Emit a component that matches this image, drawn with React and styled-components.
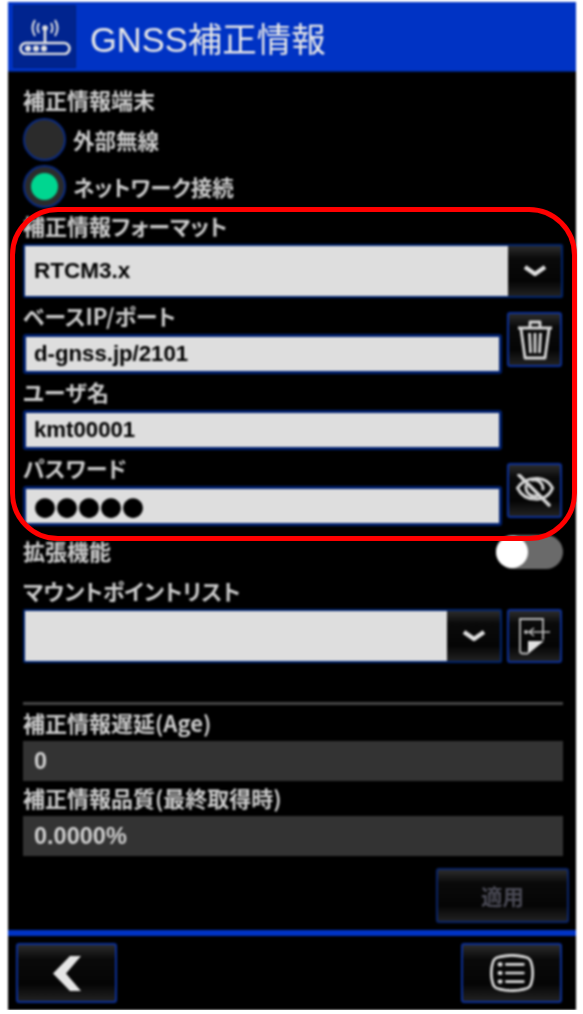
import React from 'react';
import styled, { createGlobalStyle } from 'styled-components';

const Global = createGlobalStyle`
    html, body { margin: 0; padding: 0; background: #fff; }
    body { font-family: "Noto Sans CJK JP", "Liberation Sans", sans-serif; font-feature-settings: "palt"; }
`;

const Screen = styled.div`
    position: relative;
    width: 568px;
    height: 1008px;
    margin: 2px 0 0 8px;
`;
const Panel = styled.div`
    height: 100%;
    background: #000;
    display: flex;
    flex-direction: column;
    filter: blur(.8px);
`;
const Header = styled.header`
    display: flex;
    align-items: center;
    gap: 14px;
    height: 70px;
    padding-left: 5px;
    background: #0033c4;
    border-bottom: 1px solid #00206e;
    box-sizing: border-box;
`;
const HeaderIcon = styled.div`
    width: 63px;
    height: 63px;
    display: flex;
    align-items: center;
    justify-content: center;
    background: #00248f;
    border: 1px solid #001f78;
    box-sizing: border-box;
`;
const Title = styled.h1`
    margin: 0;
    font-family: "Liberation Sans", "Noto Sans CJK JP", sans-serif;
    font-size: 34.5px;
    font-weight: 400;
    color: #e8e8e8;
    font-feature-settings: normal;
`;
const Body = styled.main`
    flex: 1;
    display: flex;
    flex-direction: column;
    padding: 17px 13px 0 15px;
    box-sizing: border-box;
`;
const Label = styled.div`
    height: 24px;
    line-height: 20px;
    margin-bottom: ${p => (p.$flush ? 0 : 5)}px;
    font-size: 22px;
    font-weight: 700;
    color: #cccccc;
    white-space: nowrap;
`;
const RadioGroup = styled.div`
    display: flex;
    flex-direction: column;
    gap: 4px;
    margin-bottom: 7px;
`;
const RadioRow = styled.div`
    display: flex;
    align-items: center;
    gap: 7px;
    height: 43px;
    font-size: 21.5px;
    font-weight: 700;
    color: #cccccc;
`;
const Radio = styled.span`
    width: 43px;
    height: 43px;
    border-radius: 50%;
    border: 2px solid #0a2a80;
    background: #2b2b2b;
    box-sizing: border-box;
    display: flex;
    align-items: center;
    justify-content: center;
    &::after {
        content: '';
        display: ${p => (p.$on ? 'block' : 'none')};
        width: 27px;
        height: 27px;
        border-radius: 50%;
        background: #00d690;
    }
`;
const Rows = styled.div`
    display: flex;
    gap: 5px;
    align-items: flex-start;
`;
const Fields = styled.div`
    flex: none;
    width: 479px;
    display: flex;
    flex-direction: column;
`;
const Input = styled.div`
    height: 40px;
    padding-left: 8px;
    box-sizing: border-box;
    display: flex;
    align-items: center;
    background: #dedede;
    border: 3px solid #00206e;
    border-radius: 3px;
    color: #000;
    font-family: "Liberation Sans", sans-serif;
    font-size: 22.2px;
    font-weight: 700;
    margin-bottom: ${p => (p.$last ? 0 : 7)}px;
`;
const Dots = styled.span`
    font-family: "Noto Sans CJK JP", sans-serif;
    font-feature-settings: normal;
    font-size: 22px;
    color: #000;
`;
const Select = styled.div`
    height: 54px;
    display: flex;
    margin-bottom: ${p => (p.$last ? 0 : 7)}px;
    border: 2px solid #00246f;
    border-radius: 2px;
    box-sizing: border-box;
`;
const SelectValue = styled.div`
    flex: 1;
    display: flex;
    align-items: center;
    padding-left: 9px;
    background: #dedede;
    color: #000;
    font-family: "Liberation Sans", sans-serif;
    font-size: 22.5px;
    font-weight: 700;
`;
const SelectArrow = styled.div`
    width: 53px;
    display: flex;
    align-items: center;
    justify-content: center;
    background: linear-gradient(#2c2c2c, #0a0a0a 25%, #050505 70%, #222);
`;
const IconButton = styled.button`
    flex: none;
    display: flex;
    align-items: center;
    justify-content: center;
    width: ${p => p.$w || 55}px;
    height: ${p => p.$h || 55}px;
    margin-top: ${p => p.$top || 0}px;
    padding: 0;
    background: linear-gradient(#2c2c2c, #0a0a0a 25%, #050505 70%, #222);
    border: 2px solid ${p => (p.$dim ? '#0a2468' : '#0b2f96')};
    border-radius: 3px;
    box-sizing: border-box;
    color: ${p => (p.$dim ? '#4a4a55' : '#d8d8d8')};
    font-family: inherit;
    font-size: 21.5px;
    font-weight: 700;
`;
const SwitchRow = styled.div`
    display: flex;
    justify-content: space-between;
    align-items: center;
    height: 34px;
    margin: 9px 0 11px;
`;
const Switch = styled.span`
    position: relative;
    width: 67px;
    height: 34px;
    border-radius: 17px;
    background: #6a6a6a;
    &::after {
        content: '';
        position: absolute;
        left: 0;
        top: 1px;
        width: 32px;
        height: 32px;
        border-radius: 50%;
        background: #fff;
    }
`;
const Divider = styled.hr`
    width: 100%;
    height: 3px;
    margin: 39px 0 7px;
    border: 0;
    background: #444;
`;
const ReadOnly = styled.div`
    height: 40px;
    margin-bottom: 6px;
    padding-left: 11px;
    display: flex;
    align-items: center;
    background: #333;
    color: #d0d0d0;
    font-family: "Liberation Sans", sans-serif;
    font-size: 23.5px;
    font-weight: 700;
`;
const Apply = styled.div`
    display: flex;
    justify-content: flex-end;
    margin: 6px -6px 0 0;
`;
const Footer = styled.footer`
    height: 80px;
    margin-top: 7px;
    padding: 7px 14px 0 8px;
    box-sizing: border-box;
    display: flex;
    justify-content: space-between;
    align-items: flex-start;
    border-top: 6px solid #0033c4;
`;
const Highlight = styled.div`
    position: absolute;
    left: 2px;
    top: 205px;
    width: 567px;
    height: 334px;
    box-sizing: border-box;
    border: 5px solid #f00;
    border-radius: 48px;
    pointer-events: none;
`;

const Chevron = () => (
    <svg width="24" height="14" viewBox="0 0 24 14" fill="none" stroke="#e0e0e0" strokeWidth="4.4" strokeLinejoin="round">
        <path d="M2 3 L12 10 L22 3" />
    </svg>
);
const Trash = () => (
    <svg width="36" height="40" viewBox="0 0 36 40" fill="none" stroke="#d8d8d8" strokeWidth="2.8" strokeLinejoin="round">
        <path d="M1 8 H35" strokeWidth="3.2" />
        <path d="M13 7 V2 H23 V7" />
        <path d="M4 9 L8 38 H28 L32 9" />
        <path d="M12.5 13 L13.5 33 M18 13 V33 M23.5 13 L22.5 33" />
    </svg>
);
const EyeOff = () => (
    <svg width="38" height="33" viewBox="0 0 38 33" fill="none" stroke="#d4d4d4" strokeWidth="3" strokeLinecap="round">
        <path d="M1.5 14 C6 7 14 4 22 4.5 C29 5 34 9 36.5 14 C34 21 27 26 19 25 C11 25 5 21 1.5 14 Z" />
        <path d="M10 12 A9 9 0 0 0 21 22 M27 15 A9 9 0 0 0 16 6" />
        <path d="M3 1 L33 31" strokeWidth="3.6" />
    </svg>
);
const DocImport = () => (
    <svg width="32" height="37" viewBox="0 0 32 37" fill="none" stroke="#bdbdbd" strokeWidth="1.8">
        <path d="M24 22 V1 H1 V33 Q1 35.5 4 35.5 H9" />
        <path d="M31 14 H10 M15 10 L10 14 L15 18" strokeWidth="1.6" />
        <circle cx="7" cy="14" r="2" fill="#bdbdbd" stroke="none" />
        <path d="M9 23 H25 L9 36 Z" fill="#e2e2e2" stroke="none" />
    </svg>
);
const Router = () => (
    <svg width="52" height="36" viewBox="0 0 52 36" fill="none" stroke="#e4e4e4" strokeWidth="2">
        <circle cx="26" cy="9" r="2.8" fill="#e4e4e4" stroke="none" />
        <path d="M26 10 V24" strokeWidth="2.6" />
        <path d="M20 4 Q17 9 20 14 M32 4 Q35 9 32 14" />
        <path d="M16 1 Q11 9 16 17 M36 1 Q41 9 36 17" />
        <rect x="1.5" y="24" width="49" height="11" rx="5.5" strokeWidth="2.6" />
        <circle cx="9" cy="29.5" r="3" fill="#e4e4e4" stroke="none" />
        <circle cx="17" cy="29.5" r="3" fill="#e4e4e4" stroke="none" />
        <circle cx="25" cy="29.5" r="3" fill="#e4e4e4" stroke="none" />
    </svg>
);
const Back = () => (
    <svg width="28" height="35" viewBox="0 0 28 35"><path d="M17 0 H28 L13 17.5 L28 35 H17 L0 17.5 Z" fill="#e6e6e6" /></svg>
);
const ListIcon = () => (
    <svg width="46" height="38" viewBox="0 0 46 40" fill="none" stroke="#dcdcdc" strokeWidth="2.8" strokeLinecap="round">
        <path d="M10 3 C18 1 28 1 36 3 C42 4 43 7 44 12 C45 17 45 23 44 28 C43 33 42 36 36 37 C28 39 18 39 10 37 C4 36 3 33 2 28 C1 23 1 17 2 12 C3 7 4 4 10 3 Z" />
        <path d="M17 11 H35 M17 20 H35 M17 29 H35" />
        <path d="M10 11 H11 M10 20 H11 M10 29 H11" strokeWidth="4.4" />
    </svg>
);

const App = () => (
    <Screen>
        <Global />
        <Panel>
            <Header>
                <HeaderIcon><Router /></HeaderIcon>
                <Title>GNSS補正情報</Title>
            </Header>
            <Body>
                <Label>補正情報端末</Label>
                <RadioGroup>
                    <RadioRow><Radio />外部無線</RadioRow>
                    <RadioRow><Radio $on />ネットワーク接続</RadioRow>
                </RadioGroup>
                <Label>補正情報フォーマット</Label>
                <Select>
                    <SelectValue>RTCM3.x</SelectValue>
                    <SelectArrow><Chevron /></SelectArrow>
                </Select>
                <Rows>
                    <Fields>
                        <Label>ベースIP/ポート</Label>
                        <Input>d-gnss.jp/2101</Input>
                        <Label>ユーザ名</Label>
                        <Input>kmt00001</Input>
                        <Label>パスワード</Label>
                        <Input $last><Dots>●●●●●</Dots></Input>
                    </Fields>
                    <div>
                        <IconButton $top={7}><Trash /></IconButton>
                        <IconButton $top={96}><EyeOff /></IconButton>
                    </div>
                </Rows>
                <SwitchRow>
                    <Label $flush>拡張機能</Label>
                    <Switch />
                </SwitchRow>
                <Label>マウントポイントリスト</Label>
                <Rows>
                    <Fields>
                        <Select $last>
                            <SelectValue />
                            <SelectArrow><Chevron /></SelectArrow>
                        </Select>
                    </Fields>
                    <IconButton $h={54}><DocImport /></IconButton>
                </Rows>
                <Divider />
                <Label>補正情報遅延(Age)</Label>
                <ReadOnly>0</ReadOnly>
                <Label>補正情報品質(最終取得時)</Label>
                <ReadOnly>0.0000%</ReadOnly>
                <Apply><IconButton $w={133} $dim>適用</IconButton></Apply>
            </Body>
            <Footer>
                <IconButton $w={101} $h={60}><Back /></IconButton>
                <IconButton $w={101} $h={60}><ListIcon /></IconButton>
            </Footer>
        </Panel>
        <Highlight />
    </Screen>
);

export default App;
